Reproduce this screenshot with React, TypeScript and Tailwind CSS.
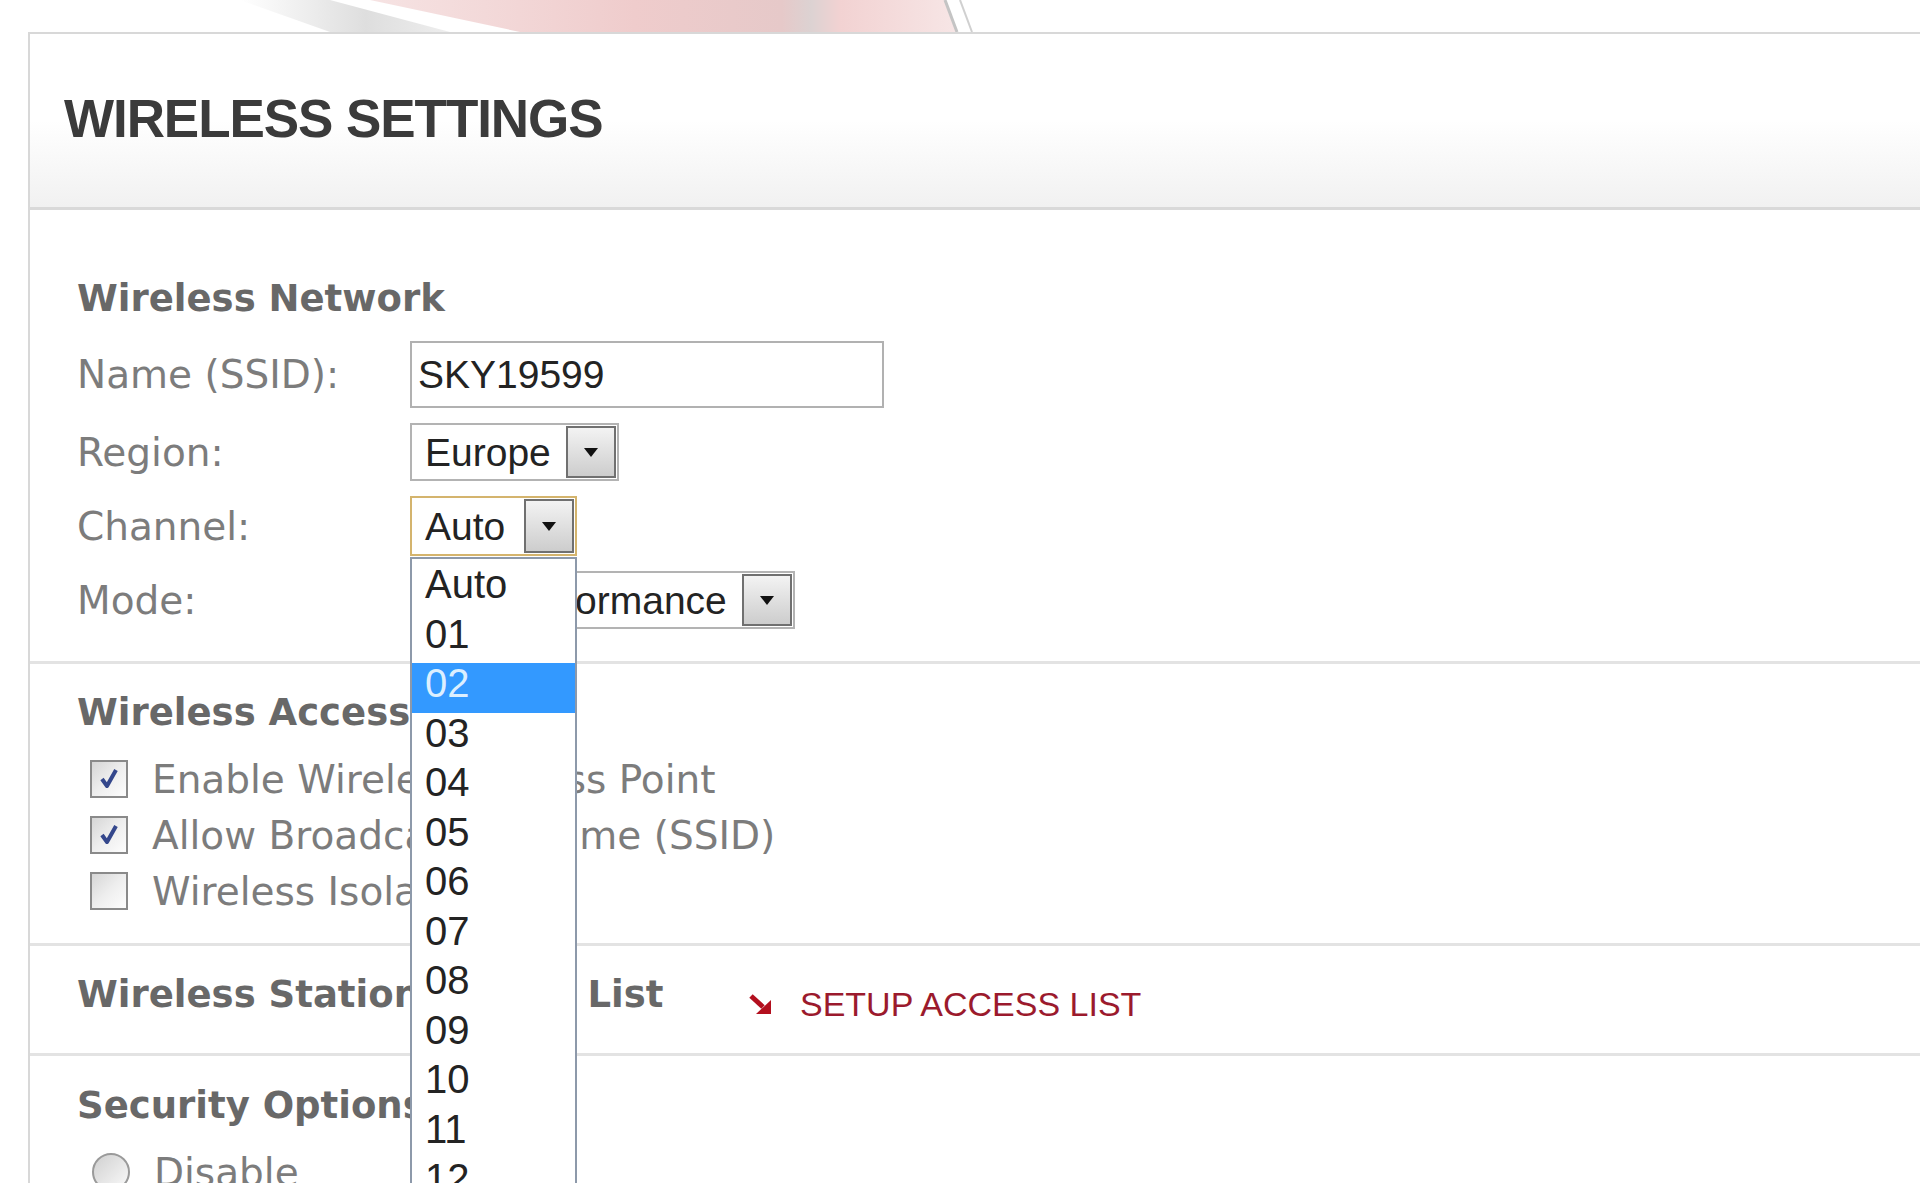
import clsx from "clsx";

const labelCls = "text-[39px] leading-none text-[#7c7c7c] font-['DejaVu_Sans',sans-serif]";
const headCls = "text-[37px] leading-none font-bold text-[#686868] font-['DejaVu_Sans',sans-serif]";
const valueCls = "text-[39px] leading-none text-[#232323] font-['Liberation_Sans',Arial,sans-serif]";

const channels = ["Auto", "01", "02", "03", "04", "05", "06", "07", "08", "09", "10", "11", "12", "13"];

function Arrow() {
  return (
    <svg width="14" height="9" viewBox="0 0 14 9">
      <polygon points="0,0 14,0 7,9" fill="#111" />
    </svg>
  );
}

function Select({
  value,
  className,
  textPad = "pl-[13px]",
  focused,
  children,
}: {
  value: string;
  className: string;
  textPad?: string;
  focused?: boolean;
  children?: React.ReactNode;
}) {
  return (
    <div className="relative">
      <div
        className={clsx(
          "flex items-stretch bg-white border-2",
          focused ? "border-[#d4b46d]" : "border-[#b3b3b3]",
          className,
        )}
      >
        <div className={clsx(valueCls, textPad, "flex-1 flex items-center overflow-hidden whitespace-nowrap")}>
          {value}
        </div>
        <div className="w-[50px] m-[1px] border-2 border-[#707070] bg-gradient-to-b from-[#f3f3f3] to-[#cdcdcd] flex items-center justify-center">
          <Arrow />
        </div>
      </div>
      {children}
    </div>
  );
}

function Checkbox({ checked }: { checked?: boolean }) {
  return (
    <div className="w-[38px] h-[38px] border-2 border-[#8a8a8a] bg-gradient-to-br from-[#d6d6d6] via-[#eeeeee] to-[#fdfdfd] flex items-center justify-center">
      {checked && (
        <svg width="26" height="26" viewBox="0 0 26 26">
          <path d="M6 13 L11 20 L20 4" fill="none" stroke="#34478c" strokeWidth="4" strokeLinejoin="round" />
        </svg>
      )}
    </div>
  );
}

function Row({ label, children, h }: { label: string; children: React.ReactNode; h: string }) {
  return (
    <div className={clsx("flex items-center", h)}>
      <div className={clsx(labelCls, "w-[333px]")}>{label}</div>
      {children}
    </div>
  );
}

function Divider() {
  return <div className="border-t-[3px] border-[#e3e3e3]" />;
}

export default function App() {
  return (
    <div className="w-[1920px] h-[1183px] overflow-hidden bg-white">
      {/* banner artwork above the panel */}
      <div className="h-[32px]">
        <svg width="1920" height="32" viewBox="0 0 1920 32">
          <defs>
            <linearGradient id="pink" x1="0" x2="1" y1="0" y2="0">
              <stop offset="0" stopColor="#f6e3e3" />
              <stop offset="0.45" stopColor="#efcccc" />
              <stop offset="0.7" stopColor="#e6c9c9" />
              <stop offset="0.75" stopColor="#dcd2d2" />
              <stop offset="0.8" stopColor="#f2d2d2" />
              <stop offset="1" stopColor="#f7e6e6" />
            </linearGradient>
            <linearGradient id="gray" x1="0" x2="1" y1="0" y2="0">
              <stop offset="0" stopColor="#ffffff" />
              <stop offset="0.6" stopColor="#dedede" />
              <stop offset="1" stopColor="#eeeeee" />
            </linearGradient>
          </defs>
          <polygon points="240,0 330,0 450,32 330,32" fill="url(#gray)" />
          <polygon points="370,0 945,0 958,32 520,32" fill="url(#pink)" />
          <line x1="945" y1="0" x2="957" y2="32" stroke="#c4c4c4" strokeWidth="3" />
          <line x1="960" y1="0" x2="972" y2="32" stroke="#d0d0d0" strokeWidth="2" />
        </svg>
      </div>

      <div className="ml-[28px] border-l-2 border-t-2 border-[#d8d8d8] h-full">
        {/* header */}
        <div className="h-[176px] border-b-[3px] border-[#d9d9d9] bg-gradient-to-b from-white via-white to-[#f1f1f1] pl-[34px] pt-[58px]">
          <h1 className="text-[53px] leading-none font-bold tracking-[-0.02em] text-[#3b3b3b] font-['Liberation_Sans',Arial,sans-serif]">
            WIRELESS SETTINGS
          </h1>
        </div>

        {/* wireless network */}
        <div className="pl-[47px] pt-[70px] pb-[32px]">
          <div className={headCls}>Wireless Network</div>
          <div className="mt-[24px] flex flex-col gap-[15px]">
            <Row label="Name (SSID):" h="h-[67px]">
              <div className={clsx(valueCls, "w-[474px] h-[67px] border-2 border-[#b1b1b1] flex items-center pl-[6px]")}>
                SKY19599
              </div>
            </Row>
            <Row label="Region:" h="h-[58px]">
              <Select value="Europe" className="w-[209px] h-[58px]" />
            </Row>
            <Row label="Channel:" h="h-[60px]">
              <Select value="Auto" className="w-[167px] h-[60px]" focused>
                <div className="absolute left-0 top-[61px] w-[167px] h-[720px] border-2 border-[#8d99aa] bg-white pt-[5px] z-10">
                  {channels.map((c) => (
                    <div
                      key={c}
                      className={clsx(
                        valueCls,
                        "h-[49.5px] leading-[49.5px] pl-[13px] text-[40px]",
                        c === "02" && "bg-[#3399ff] text-[#dcefff]",
                      )}
                    >
                      {c}
                    </div>
                  ))}
                </div>
              </Select>
            </Row>
            <Row label="Mode:" h="h-[58px]">
              <Select value="Max Performance" textPad="pl-[7px]" className="w-[385px] h-[58px]" />
            </Row>
          </div>
        </div>
        <Divider />

        {/* wireless access point */}
        <div className="pl-[47px] pt-[30px] pb-[24px]">
          <div className={headCls}>Wireless Access Point</div>
          <div className="mt-[20px] pl-[13px]">
            {[
              ["Enable Wireless Access Point", true],
              ["Allow Broadcast of Name (SSID)", true],
              ["Wireless Isolation", false],
            ].map(([t, c]) => (
              <div key={t as string} className="h-[56px] flex items-center gap-[24px]">
                <Checkbox checked={c as boolean} />
                <span className={labelCls}>{t as string}</span>
              </div>
            ))}
          </div>
        </div>
        <Divider />

        {/* access list */}
        <div className="h-[107px] pl-[47px] pt-[30px] flex items-start">
          <div className={clsx(headCls, "w-[671px]")}>Wireless Station Access List</div>
          <a className="mt-[11px] flex items-center gap-[28px] cursor-pointer">
            <svg width="24" height="22" viewBox="0 0 24 22">
              <line x1="3" y1="3" x2="15" y2="14" stroke="#b30f1e" strokeWidth="5" />
              <polygon points="23,21 8,21 23,7" fill="#b30f1e" />
            </svg>
            <span className="text-[34px] leading-none text-[#9b1a2d] font-['Liberation_Sans',Arial,sans-serif]">
              SETUP ACCESS LIST
            </span>
          </a>
        </div>
        <Divider />

        {/* security */}
        <div className="pl-[47px] pt-[31px]">
          <div className={headCls}>Security Options</div>
          <div className="mt-[27px] pl-[15px] h-[42px] flex items-center gap-[24px]">
            <div className="w-[38px] h-[38px] rounded-full border-2 border-[#9a9a9a] bg-gradient-to-br from-[#d0d0d0] to-[#fafafa]" />
            <span className={labelCls}>Disable</span>
          </div>
        </div>
      </div>
    </div>
  );
}
